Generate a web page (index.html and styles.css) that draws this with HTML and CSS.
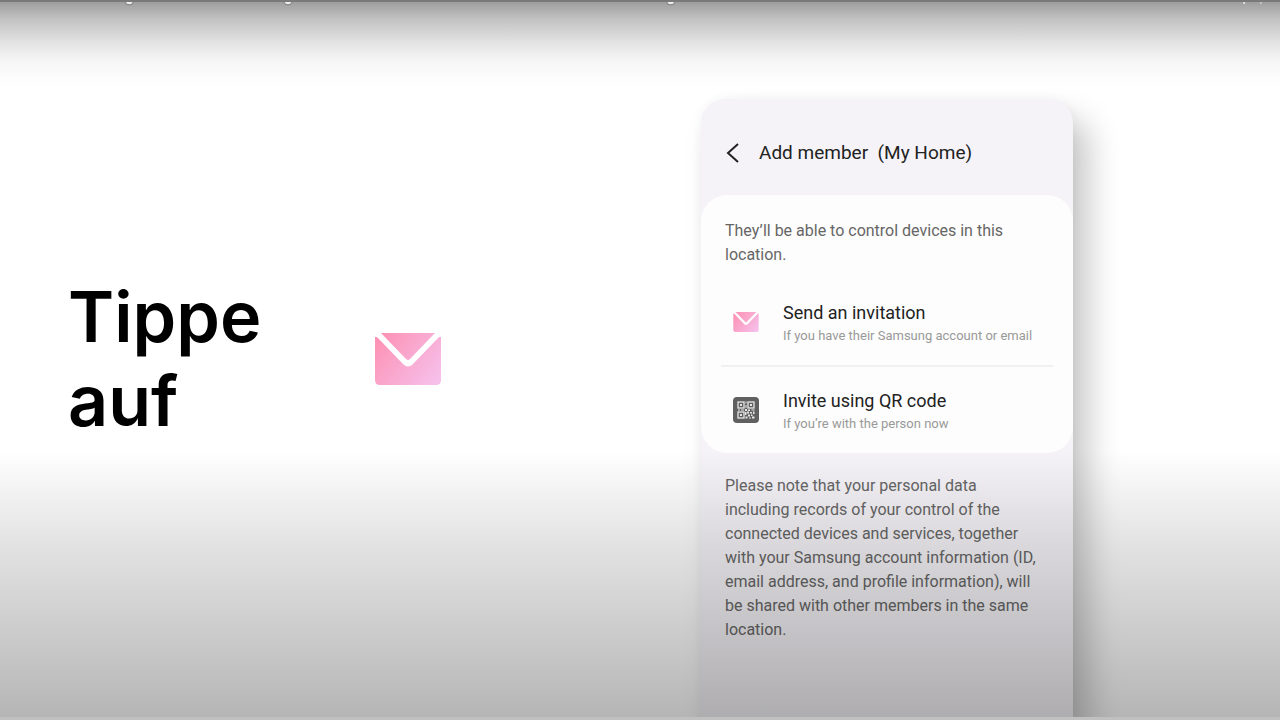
FILE: index.html
```html
<!DOCTYPE html>
<html lang="de">

<head>
  <meta charset="UTF-8">
  <meta name="viewport" content="width=device-width, initial-scale=1.0">
  <title>Tippe auf</title>
  <link rel="stylesheet" href="styles.css">
</head>

<body>
  <!-- shared envelope symbol -->
  <svg class="defs" width="0" height="0" aria-hidden="true">
    <defs>
      <linearGradient id="pink" x1="0" y1="0.2" x2="1" y2="0.8">
        <stop offset="0" stop-color="#fd93b5"></stop>
        <stop offset="1" stop-color="#f6bfea"></stop>
      </linearGradient>
      <symbol id="mail" viewBox="0 0 66 52">
        <path fill="url(#pink)" d="M6 0H60L35 26Q33 28 31 26ZM0 4H2L28 31Q33 36 38 31L64 4H66V47Q66 52 61 52H5Q0 52 0 47Z"></path>
      </symbol>
    </defs>
  </svg>

  <main class="stage">
    <div class="hint">
      <h1>Tippe<br>auf</h1>
      <svg class="mail-large" aria-hidden="true"><use href="#mail"></use></svg>
    </div>

    <section class="phone">
      <header class="phone-header">
        <button class="back" aria-label="Back">
          <svg width="14" height="20" viewBox="0 0 14 20" aria-hidden="true">
            <path d="M13 1L3 10L13 19" fill="none" stroke="#222" stroke-width="2"></path>
          </svg>
        </button>
        <h2>Add member&nbsp; (My Home)</h2>
      </header>

      <div class="card">
        <p class="copy">They’ll be able to control devices in this location.</p>
        <button class="option">
          <svg class="mail-small" aria-hidden="true"><use href="#mail"></use></svg>
          <span class="option-text">
            <span class="option-title">Send an invitation</span>
            <span class="option-sub">If you have their Samsung account or email</span>
          </span>
        </button>
        <hr>
        <button class="option">
          <svg class="qr" viewBox="0 0 26 26" aria-hidden="true">
            <rect width="26" height="26" rx="4" fill="#606060"></rect>
            <g fill="none" stroke="#e6e6e6" stroke-width="1.3">
              <rect x="5" y="5" width="6" height="6"></rect>
              <rect x="15" y="5" width="6" height="6"></rect>
              <rect x="5" y="15" width="6" height="6"></rect>
            </g>
            <g fill="#e6e6e6">
              <path d="M7 7h2v2H7zM17 7h2v2h-2zM7 17h2v2H7z"></path>
              <path d="M12.500 4.500h1v2h-1zM12.500 8h1v3h-1zM5 12.500h2v1H5zM8 12.500h3v1H8zM12 12h2v2h-2zM15 12.500h2v1.500h-2zM18.500 12.500h3v1h-3zM12 15h1.500v3H12zM14 14.500h2v2h-2zM17 15h2v1.500h-2zM20 14.500h1.500v2.500H20zM15 17.500h2v2h-2zM18 17.500h1.500v1.500H18zM12.500 19.500h2v2h-2zM16 20.500h2v1h-2zM19 19.500h2.500v2H19z"></path>
            </g>
          </svg>
          <span class="option-text">
            <span class="option-title">Invite using QR code</span>
            <span class="option-sub">If you’re with the person now</span>
          </span>
        </button>
      </div>

      <p class="copy note">Please note that your personal data<br>including records of your control of the connected devices and services, together<br>with your Samsung account information (ID, email address, and profile information), will<br>be shared with other members in the same location.</p>
    </section>

    <!-- dimming over the top and bottom edges -->
    <div class="shade"></div>
    <svg class="edge-marks" aria-hidden="true">
      <g fill="none" stroke="#888" stroke-width="1">
        <ellipse cx="10.100%" cy="0" rx="4" ry="3"></ellipse>
        <ellipse cx="22.500%" cy="0" rx="4" ry="3"></ellipse>
        <ellipse cx="52.400%" cy="0" rx="4" ry="3"></ellipse>
      </g>
      <g fill="#eee">
        <ellipse cx="10.100%" cy="0" rx="3" ry="2"></ellipse>
        <ellipse cx="22.500%" cy="0" rx="3" ry="2"></ellipse>
        <ellipse cx="52.400%" cy="0" rx="3" ry="2"></ellipse>
        <circle cx="97.200%" cy="1" r="1"></circle>
        <circle cx="98.500%" cy="1" r="1" fill="#ccc"></circle>
      </g>
    </svg>
  </main>
</body>

</html>
```
FILE: styles.css
```css
* {
  margin: 0;
  padding: 0;
  box-sizing: border-box;
}

body {
  font-family: Roboto, "Liberation Sans", sans-serif;
  background-color: #fff;
  color: #222;
}

.defs {
  position: absolute;
}

.stage {
  position: relative;
  display: grid;
  grid-template-columns: 1fr 372px;
  min-height: 100vh;
  padding: 99px 207px 0 68px;
  overflow: hidden;
}

/* left side */
.hint {
  display: flex;
  align-items: center;
  align-self: start;
  gap: 114px;
  padding-top: 176px;
}

.hint h1 {
  font-family: Inter, "Liberation Sans", sans-serif;
  font-size: 70px;
  font-weight: 600;
  line-height: 84px;
  color: #000;
}

.mail-large {
  width: 66px;
  height: 52px;
}

/* phone */
.phone {
  background-color: #f5f3f7;
  border-radius: 24px 24px 0 0;
  box-shadow: 16px 20px 32px rgba(0, 0, 0, 0.22), 0 0 12px rgba(0, 0, 0, 0.04);
}

.phone-header {
  display: flex;
  align-items: center;
  gap: 20px;
  height: 96px;
  padding: 12px 24px 0;
}

.phone-header h2 {
  font-size: 19px;
  font-weight: 400;
  line-height: 24px;
}

.back {
  display: flex;
  border: none;
  background: none;
  cursor: pointer;
}

.card {
  padding: 24px 20px 0;
  background-color: #fdfdfd;
  border-radius: 26px;
}

.copy {
  font-size: 16px;
  line-height: 24px;
  color: #666;
}

.card .copy {
  margin-bottom: 12px;
  padding: 0 4px;
}

.option {
  display: flex;
  align-items: center;
  gap: 24px;
  width: 100%;
  height: 86px;
  padding: 0 12px;
  border: none;
  background: none;
  font-family: inherit;
  text-align: left;
  cursor: pointer;
}

.option-text {
  display: flex;
  flex-direction: column;
  padding-top: 4px;
  white-space: nowrap;
}

.option-title {
  font-size: 18px;
  line-height: 24px;
  color: #222;
}

.option-sub {
  font-size: 13px;
  line-height: 22px;
  color: #999;
}

.mail-small {
  flex: none;
  width: 26px;
  height: 20px;
}

.qr {
  flex: none;
  width: 26px;
  height: 26px;
}

hr {
  border: none;
  border-top: 2px solid #f1f1f1;
}

.note {
  padding: 21px 24px 78px;
}

/* overlays */
.shade {
  position: absolute;
  inset: 0;
  border-top: 2px solid #7a7a7a;
  border-bottom: 3px solid #c0c0c0;
  background:
    linear-gradient(rgba(0, 0, 0, 0.38), rgba(0, 0, 0, 0.24) 17px, rgba(0, 0, 0, 0.11) 41px, rgba(0, 0, 0, 0.03) 61px, transparent 84px),
    linear-gradient(to top, rgba(0, 0, 0, 0.29), rgba(0, 0, 0, 0.21) 75px, rgba(0, 0, 0, 0.11) 175px, transparent 267px);
  pointer-events: none;
}

.edge-marks {
  position: absolute;
  top: 2px;
  left: 0;
  width: 100%;
  height: 4px;
  pointer-events: none;
}
```
